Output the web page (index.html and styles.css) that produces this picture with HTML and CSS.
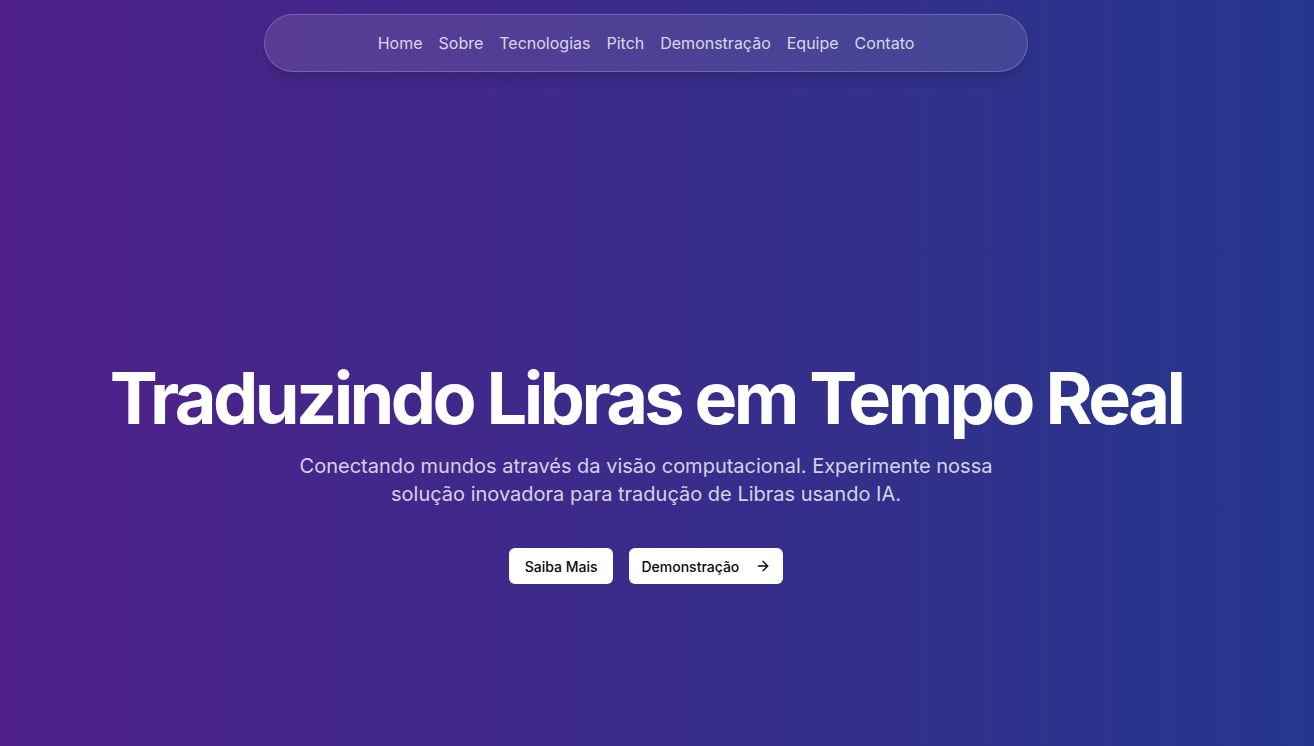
FILE: index.html
```html
<!DOCTYPE html>
<html lang="pt-BR">
<head>
<meta charset="utf-8">
<title>Libras</title>
<link rel="stylesheet" href="styles.css">
</head>
<body>
<header class="nav-wrap">
  <nav class="nav">
    <a href="#">Home</a>
    <a href="#">Sobre</a>
    <a href="#">Tecnologias</a>
    <a href="#">Pitch</a>
    <a href="#">Demonstração</a>
    <a href="#">Equipe</a>
    <a href="#">Contato</a>
  </nav>
</header>
<main class="hero">
  <h1 class="title">Traduzindo Libras em Tempo Real</h1>
  <p class="subtitle">Conectando mundos através da visão computacional. Experimente nossa solução inovadora para tradução de Libras usando IA.</p>
  <div class="actions">
    <a class="btn" href="#">Saiba Mais</a>
    <a class="btn btn-icon" href="#">Demonstração
      <svg class="arrow" width="16" height="16" viewBox="0 0 24 24" fill="none" stroke="currentColor" stroke-width="2" stroke-linecap="round" stroke-linejoin="round"><path d="M5 12h14"/><path d="m12 5 7 7-7 7"/></svg>
    </a>
  </div>
</main>
</body>
</html>
```
FILE: styles.css
```css
* { box-sizing: border-box; }
html, body { margin: 0; padding: 0; height: 100%; }
body {
  font-family: Inter, "Noto Sans", sans-serif;
  background: linear-gradient(90deg, #4f2189 0%, #25378c 100%);
  color: #fff;
  min-height: 746px;
  overflow: hidden;
}
.nav-wrap {
  position: absolute;
  top: 14px;
  left: 0;
  right: 22px;
  display: flex;
  justify-content: center;
}
.nav {
  width: 764px;
  height: 58px;
  display: flex;
  align-items: center;
  justify-content: center;
  gap: 16px;
  border-radius: 9999px;
  background: rgba(255,255,255,0.1);
  border: 1px solid rgba(255,255,255,0.2);
  box-shadow: 0 10px 15px -3px rgba(0,0,0,0.12), 0 4px 6px -4px rgba(0,0,0,0.1);
}
.nav a {
  color: rgba(255,255,255,0.8);
  text-decoration: none;
  font-size: 16px;
  line-height: 24px;
}
.hero {
  height: 746px;
  display: flex;
  flex-direction: column;
  align-items: center;
  justify-content: center;
  text-align: center;
  padding: 200px 22px 0 0;
}
.title {
  margin: 0;
  font-size: 72px;
  line-height: 72px;
  font-weight: 700;
  letter-spacing: -0.05em;
  color: #fff;
}
.subtitle {
  margin: 18px 0 0;
  max-width: 700px;
  font-size: 20px;
  line-height: 28px;
  color: rgba(255,255,255,0.8);
}
.actions {
  margin-top: 40px;
  display: flex;
  gap: 16px;
}
.btn {
  display: inline-flex;
  align-items: center;
  gap: 16px;
  height: 36px;
  padding: 0 16px;
  background: #fff;
  color: #09090b;
  border-radius: 6px;
  font-size: 14px;
  font-weight: 500;
  text-decoration: none;
}
.btn-icon { padding: 0 12px; }
.arrow { width: 16px; height: 16px; }
```
